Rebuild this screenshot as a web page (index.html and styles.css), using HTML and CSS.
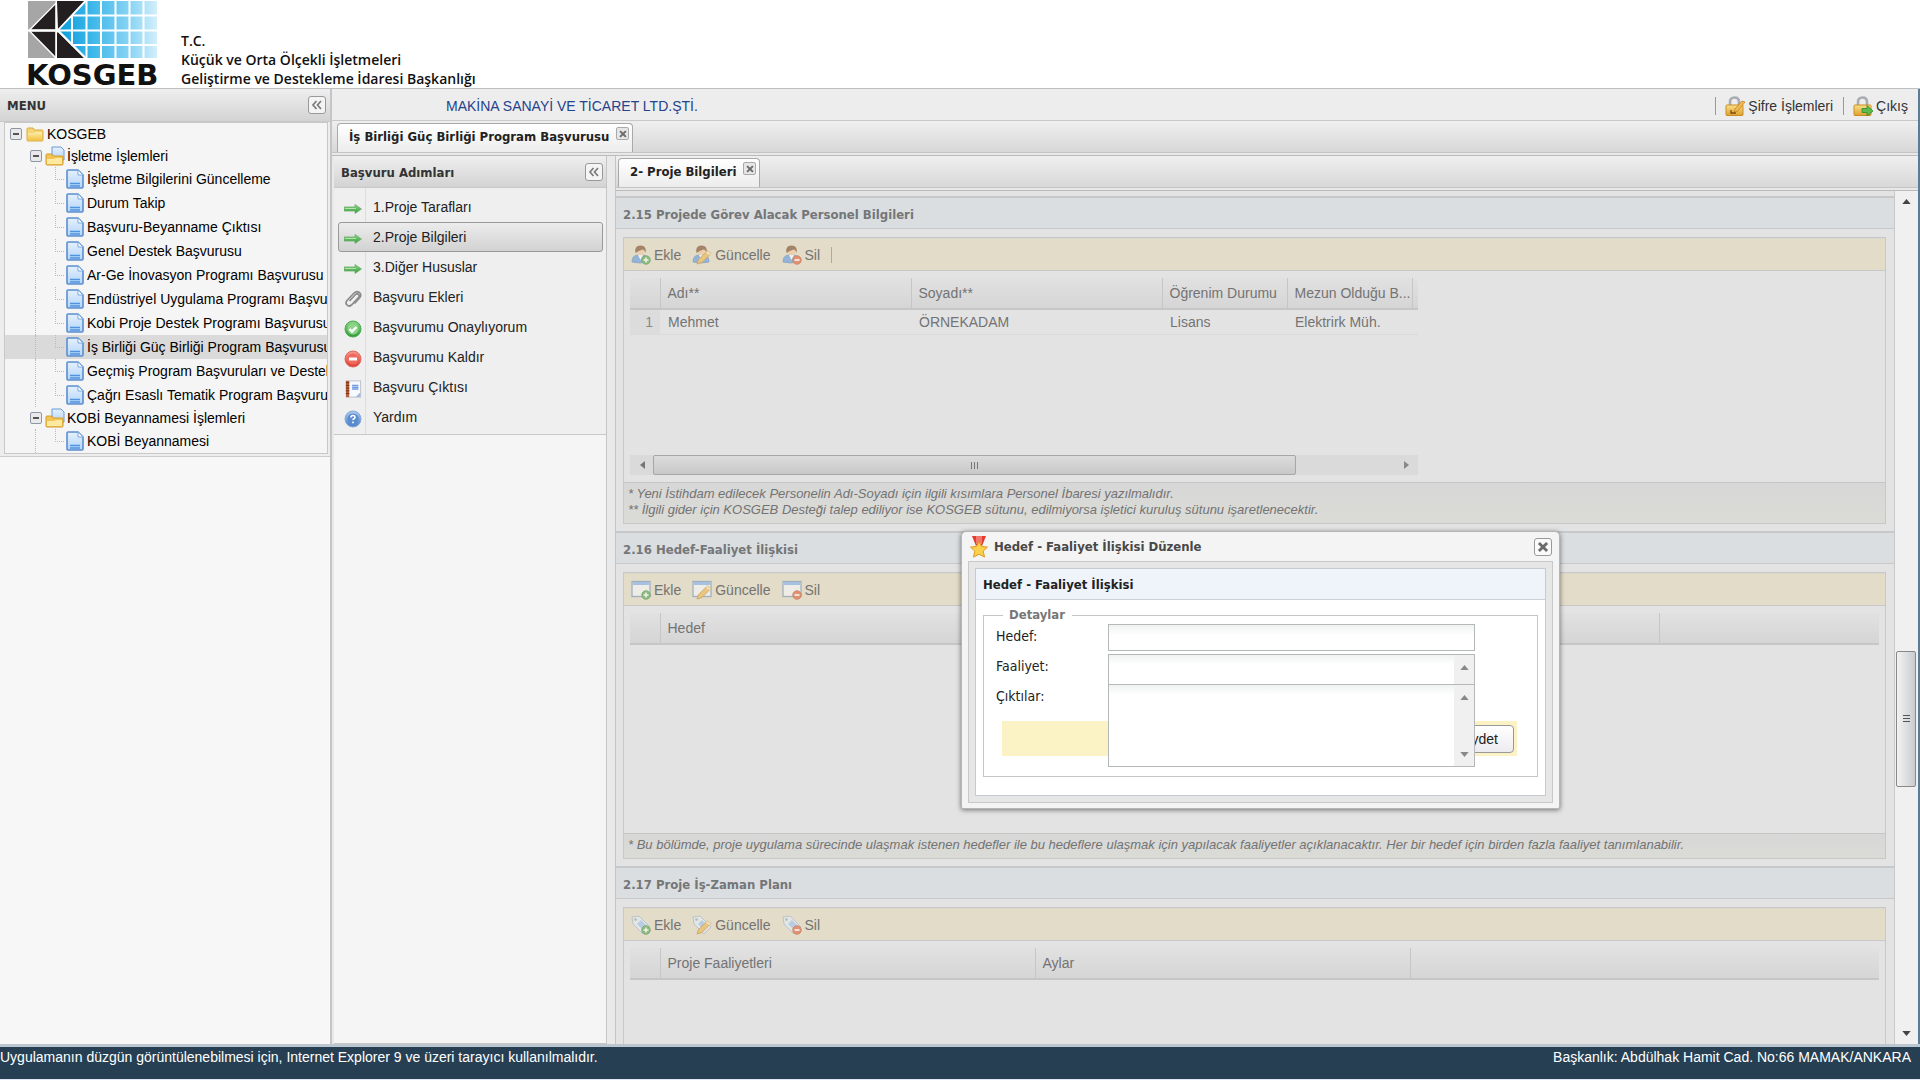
FILE: index.html
```html
<!DOCTYPE html>
<html lang="tr">
<head>
<meta charset="utf-8">
<title>KOSGEB</title>
<link rel="stylesheet" href="styles.css">
</head>
<body>
<svg class="defs" aria-hidden="true">
  <defs>
    <linearGradient id="gBlue" x1="0" x2="1"><stop offset="0" stop-color="#0b9ddb"/><stop offset=".35" stop-color="#3fb8ea"/><stop offset=".75" stop-color="#8fd6f5"/><stop offset="1" stop-color="#d3effb"/></linearGradient>
    <linearGradient id="gPage" x2="0" y2="1"><stop offset="0" stop-color="#e4f1fe"/><stop offset="1" stop-color="#b4d5f7"/></linearGradient>
    <linearGradient id="gFold" x2="0" y2="1"><stop offset="0" stop-color="#fdeeb0"/><stop offset="1" stop-color="#f3c443"/></linearGradient>
    <linearGradient id="gGreen" x2="0" y2="1"><stop offset="0" stop-color="#8fd88a"/><stop offset="1" stop-color="#2f9a35"/></linearGradient>
    <linearGradient id="gRed" x2="0" y2="1"><stop offset="0" stop-color="#f79a8e"/><stop offset="1" stop-color="#dd3a30"/></linearGradient>
    <linearGradient id="gHelp" x2="0" y2="1"><stop offset="0" stop-color="#a9c9f0"/><stop offset="1" stop-color="#4a7fc6"/></linearGradient>
    <linearGradient id="gLock" x2="0" y2="1"><stop offset="0" stop-color="#fbe08a"/><stop offset="1" stop-color="#dfa02c"/></linearGradient>
  </defs>
  <symbol id="i-page" viewBox="0 0 18 20"><path d="M1 2q0-1 1-1h10l5 5v12q0 1-1 1H2q-1 0-1-1z" fill="url(#gPage)" stroke="#5b8fd0" stroke-width="1.6"/><path d="M12 1v5h5z" fill="#fff" stroke="#7ba6dc"/><path d="M4 14.5h10M4 17h10" stroke="#4f93e0" stroke-width="1.4"/></symbol>
  <symbol id="i-folder" viewBox="0 0 18 16"><path d="M1 3q0-1 1-1h5l1.500 2H16q1 0 1 1v9q0 1-1 1H2q-1 0-1-1z" fill="#f6d577" stroke="#d9a93a"/><path d="M2 7h6l2-1h6v8H2z" fill="url(#gFold)"/></symbol>
  <symbol id="i-folderpage" viewBox="0 0 20 20"><path d="M7 1h9l3 3v10H7z" fill="url(#gPage)" stroke="#6b9ad6"/><path d="M1 9q0-1 1-1h5l1 2h9q1 0 1 1v7q0 1-1 1H2q-1 0-1-1z" fill="#f1c453" stroke="#d39c2c"/><path d="M2 13h7l2-1h6v6H2z" fill="#fde9a0"/></symbol>
  <symbol id="i-minus" viewBox="0 0 12 12"><rect x=".5" y=".5" width="11" height="11" rx="1.500" fill="#e9e9e9" stroke="#8d96a5"/><path d="M3 6h6" stroke="#222" stroke-width="1.500"/></symbol>
  <symbol id="i-arrow" viewBox="0 0 18 12"><path d="M0 4h11V1.500L17.500 6 11 10.500V8H0z" fill="url(#gGreen)" stroke="#6fae6f" stroke-width=".8"/><path d="M1 5.500h11" stroke="#b5e0b0"/></symbol>
  <symbol id="i-clip" viewBox="0 0 18 18"><path d="M5.500 11l6-6.500q1.500-1.500 3 0t0 3L7.500 15q-2.500 2-4.500 0t0-4.500L10 3q2.500-2.500 5.500-.5 2.500 2.500 0 5.500l-5 5.500" fill="none" stroke="#8b8b8b" stroke-width="1.700"/></symbol>
  <symbol id="i-check" viewBox="0 0 18 18"><circle cx="9" cy="9" r="8" fill="url(#gGreen)" stroke="#4da851"/><circle cx="9" cy="9" r="5.500" fill="#8fd48b"/><path d="M5.500 9l2.500 2.500 4.500-4.500" fill="none" stroke="#fff" stroke-width="2.400"/></symbol>
  <symbol id="i-remove" viewBox="0 0 18 18"><circle cx="9" cy="9" r="8" fill="url(#gRed)" stroke="#dd6a62"/><circle cx="9" cy="9" r="5.500" fill="#ee6a5e"/><path d="M5 9h8" stroke="#fff" stroke-width="3"/></symbol>
  <symbol id="i-book" viewBox="0 0 18 20"><rect x="1.500" y="1" width="16" height="18" fill="#f8f9fd" stroke="#b6bccb"/><path d="M3 1v18" stroke="#b6603c" stroke-width="3.500"/><path d="M1 3h4M1 6h4M1 9h4M1 12h4M1 15h4" stroke="#6b2d18"/><path d="M8 6h7M8 8h7M8 10h7" stroke="#6d9be0" stroke-width="1.600"/><path d="M12 19l5-5v5z" fill="#9db9df"/></symbol>
  <symbol id="i-help" viewBox="0 0 18 18"><circle cx="9" cy="9" r="8" fill="url(#gHelp)" stroke="#86aad8"/><circle cx="9" cy="9" r="5.500" fill="#5b8cd0"/><path d="M7 7.500q0-2 2-2t2 1.700q0 1-1 1.500t-1 1.300M9 11.500v1.700" fill="none" stroke="#fff" stroke-width="1.600"/></symbol>
  <symbol id="i-user" viewBox="0 0 20 20"><path d="M1 17q0-7 6-7h4q6 0 6 7-8 2-16 0z" fill="#5f9be0" stroke="#4478b8" stroke-width=".7"/><path d="M7 10l2.500 5L12 10z" fill="#fff"/><circle cx="9.500" cy="6" r="4.300" fill="#f1c9a0"/><path d="M4.500 8q-1.500-7.500 5-7.500T14.500 8q-1-3.500-3-3.500-4 1-7 3.500z" fill="#7b4a26"/></symbol>
  <symbol id="i-window" viewBox="0 0 20 20"><rect x="1" y="1.500" width="18" height="15" fill="#f6f8fc" stroke="#7593bd" stroke-width="1.300"/><path d="M2 3.500h16" stroke="#7fb0ef" stroke-width="3"/></symbol>
  <symbol id="i-tag" viewBox="0 0 20 20"><path d="M1 2l7-1 11 11-7 7L2 9z" fill="#e3edf8" stroke="#9db4cf"/><path d="M6 9l4-4 6 6-4 4z" fill="#9cc4f2"/><circle cx="4.500" cy="4.500" r="1.300" fill="#8aa"/></symbol>
  <symbol id="b-add" viewBox="0 0 20 20"><circle cx="15" cy="15" r="4.300" fill="#4fa84c" stroke="#2f7a31" stroke-width=".7"/><path d="M12.500 15h5M15 12.500v5" stroke="#fff" stroke-width="1.500"/></symbol>
  <symbol id="b-edit" viewBox="0 0 20 20"><path d="M5 19l1.500-4.500L15.500 6l3.500 2.500-9 9z" fill="#eeb64f" stroke="#b67f27" stroke-width=".8"/><path d="M15.500 6l3.500 2.500-1.500 1.700-3.600-2.500z" fill="#f7e3b4"/></symbol>
  <symbol id="b-del" viewBox="0 0 20 20"><circle cx="15" cy="15" r="4.300" fill="#e2603a" stroke="#b4411f" stroke-width=".7"/><path d="M12.500 15h5" stroke="#fff" stroke-width="1.700"/></symbol>
  <symbol id="i-lock" viewBox="0 0 20 20"><path d="M5 10V6q0-4.500 4.500-4.500T14 6v4" fill="none" stroke="#a9adb3" stroke-width="2.600"/><rect x="1" y="9" width="17" height="10.500" rx="1" fill="url(#gLock)" stroke="#c98d25"/></symbol>
  <symbol id="b-lockedit" viewBox="0 0 20 20"><path d="M6 14v3h5" stroke="#7a4a12" fill="none" stroke-width="1.300"/><path d="M9 16l1-3 7-8 3 1-7 9z" fill="#f3b94c" stroke="#b77d22" stroke-width=".7"/></symbol>
  <symbol id="b-go" viewBox="0 0 20 20"><path d="M9 12.500h5v-3l6 5.500-6 5v-3.500H9z" fill="#5dbb4e" stroke="#2f8a2c" stroke-width=".8"/></symbol>
  <symbol id="i-medal" viewBox="0 0 20 22"><path d="M3 0h5l2 8-3 2z" fill="#e33b30"/><path d="M17 0h-5l-2 8 3 2z" fill="#e33b30"/><path d="M7 0h6v8H7z" fill="#f4766a"/><path d="M10 5.500l2.600 5 5.900.6-4.300 4 1.300 6-5.500-2.900-5.500 2.900 1.300-6-4.300-4 5.900-.6z" fill="#fbd04a" stroke="#dd9a22"/></symbol>
  <symbol id="i-x" viewBox="0 0 12 12"><path d="M2.500 2.500l7 7M9.500 2.500l-7 7" stroke="#6b6b6b" stroke-width="2.400"/></symbol>
  <symbol id="i-collapse" viewBox="0 0 12 12"><path d="M5.500 2L2 6l3.500 4M10 2L6.500 6 10 10" fill="none" stroke="#7b7b7b" stroke-width="1.700"/></symbol>
  <symbol id="i-up" viewBox="0 0 10 6"><path d="M5 0l5 6H0z" fill="currentColor"/></symbol>
  <symbol id="i-down" viewBox="0 0 10 6"><path d="M0 0h10L5 6z" fill="currentColor"/></symbol>
  <symbol id="i-left" viewBox="0 0 6 10"><path d="M6 1v8L1 5z" fill="currentColor"/></symbol>
  <symbol id="i-right" viewBox="0 0 6 10"><path d="M0 1v8l5-4z" fill="currentColor"/></symbol>
</svg>

<div class="page">
  <header class="banner">
    <svg class="logo" width="132" height="88" viewBox="0 0 132 88" role="img" aria-label="KOSGEB">
      <path d="M1 1h28v57H1z" fill="#a6a6a6"/>
      <path d="M60 1h70v57H60L32 30z" fill="url(#gBlue)"/>
      <path d="M3 29L28 3v26zM3 32h25v25zM31 1h26L31 28zM31 32v26h26z" fill="#231f20"/>
      <path d="M1 30.500h129M29.500 1v57M45 14v32M59.500 1v57M74 1v57M88.500 1v57M102.500 1v57M116.500 1v57M44 15.500h86M44 45h86" stroke="#fff" stroke-width="2"/>
      <path d="M30 1h28L31 29.500zM30 32l27 26H30z" fill="#231f20"/>
      <path d="M2 30.500L29 3M2 30.500L29 58M59 0L30.500 30.500 59 59" fill="none" stroke="#fff" stroke-width="1.500"/>
      <text class="logo-text" x="-1" y="85">KOSGEB</text>
    </svg>
    <p class="org">T.C.<br>Küçük ve Orta Ölçekli İşletmeleri<br>Geliştirme ve Destekleme İdaresi Başkanlığı</p>
  </header>

  <div class="main">
    <aside class="menu">
      <div class="bar menu-head"><h2>MENU</h2><button class="tool" aria-label="Daralt"><svg><use href="#i-collapse"/></svg></button></div>
      <div class="tree-wrap">
      <ul class="tree">
        <li><a class="row root" href="#"><svg class="exp"><use href="#i-minus"/></svg><svg class="fold"><use href="#i-folder"/></svg>KOSGEB</a>
          <ul>
            <li><a class="row dir" href="#"><svg class="exp"><use href="#i-minus"/></svg><svg class="dirpic"><use href="#i-folderpage"/></svg>İşletme İşlemleri</a>
              <ul class="leaves">
                <li><a class="row leaf" href="#"><svg class="pg"><use href="#i-page"/></svg>İşletme Bilgilerini Güncelleme</a></li>
                <li><a class="row leaf" href="#"><svg class="pg"><use href="#i-page"/></svg>Durum Takip</a></li>
                <li><a class="row leaf" href="#"><svg class="pg"><use href="#i-page"/></svg>Başvuru-Beyanname Çıktısı</a></li>
                <li><a class="row leaf" href="#"><svg class="pg"><use href="#i-page"/></svg>Genel Destek Başvurusu</a></li>
                <li><a class="row leaf" href="#"><svg class="pg"><use href="#i-page"/></svg>Ar-Ge İnovasyon Programı Başvurusu</a></li>
                <li><a class="row leaf" href="#"><svg class="pg"><use href="#i-page"/></svg>Endüstriyel Uygulama Programı Başvurusu</a></li>
                <li><a class="row leaf" href="#"><svg class="pg"><use href="#i-page"/></svg>Kobi Proje Destek Programı Başvurusu</a></li>
                <li><a class="row leaf current" href="#"><svg class="pg"><use href="#i-page"/></svg>İş Birliği Güç Birliği Program Başvurusu</a></li>
                <li><a class="row leaf" href="#"><svg class="pg"><use href="#i-page"/></svg>Geçmiş Program Başvuruları ve Destekler</a></li>
                <li><a class="row leaf" href="#"><svg class="pg"><use href="#i-page"/></svg>Çağrı Esaslı Tematik Program Başvurusu</a></li>
              </ul>
            </li>
            <li><a class="row dir" href="#"><svg class="exp"><use href="#i-minus"/></svg><svg class="dirpic"><use href="#i-folderpage"/></svg>KOBİ Beyannamesi İşlemleri</a>
              <ul class="leaves">
                <li><a class="row leaf" href="#"><svg class="pg"><use href="#i-page"/></svg>KOBİ Beyannamesi</a></li>
              </ul>
            </li>
          </ul>
        </li>
      </ul>
      </div>
    </aside>

    <div class="work">
      <div class="topbar">
        <span class="company">MAKİNA SANAYİ VE TİCARET LTD.ŞTİ.</span>
        <nav class="account">
          <a href="#"><svg><use href="#i-lock"/><use href="#b-lockedit"/></svg>Şifre İşlemleri</a>
          <a href="#"><svg><use href="#i-lock"/><use href="#b-go"/></svg>Çıkış</a>
        </nav>
      </div>
      <div class="tabs outer"><div class="tab"><span>İş Birliği Güç Birliği Program Başvurusu</span><button aria-label="Kapat"><svg><use href="#i-x"/></svg></button></div></div>

      <div class="split">
        <section class="steps">
          <div class="bar steps-head"><h2>Başvuru Adımları</h2><button class="tool" aria-label="Daralt"><svg><use href="#i-collapse"/></svg></button></div>
          <nav class="step-list">
            <a href="#"><svg><use href="#i-arrow"/></svg>1.Proje Tarafları</a>
            <a class="current" href="#"><svg><use href="#i-arrow"/></svg>2.Proje Bilgileri</a>
            <a href="#"><svg><use href="#i-arrow"/></svg>3.Diğer Hususlar</a>
            <a href="#"><svg><use href="#i-clip"/></svg>Başvuru Ekleri</a>
            <a href="#"><svg><use href="#i-check"/></svg>Başvurumu Onaylıyorum</a>
            <a href="#"><svg><use href="#i-remove"/></svg>Başvurumu Kaldır</a>
            <a href="#"><svg><use href="#i-book"/></svg>Başvuru Çıktısı</a>
            <a href="#"><svg><use href="#i-help"/></svg>Yardım</a>
          </nav>
        </section>

        <section class="detail">
          <div class="tabs inner"><div class="tab"><span>2- Proje Bilgileri</span><button aria-label="Kapat"><svg><use href="#i-x"/></svg></button></div></div>
          <div class="scroller">
            <div class="content">
              <section class="block">
                <h3>2.15 Projede Görev Alacak Personel Bilgileri</h3>
                <div class="box">
                  <div class="toolbar">
                    <button><svg><use href="#i-user"/><use href="#b-add"/></svg>Ekle</button>
                    <button><svg><use href="#i-user"/><use href="#b-edit"/></svg>Güncelle</button>
                    <button><svg><use href="#i-user"/><use href="#b-del"/></svg>Sil</button>
                    <i class="sep"></i>
                  </div>
                  <div class="grid-area people">
                    <table class="grid">
                      <colgroup><col class="c-num"><col class="c-name"><col class="c-name"><col class="c-small"><col class="c-small"><col></colgroup>
                      <thead><tr><th></th><th>Adı**</th><th>Soyadı**</th><th>Öğrenim Durumu</th><th>Mezun Olduğu B...</th><th></th></tr></thead>
                      <tbody><tr><td class="num">1</td><td>Mehmet</td><td>ÖRNEKADAM</td><td>Lisans</td><td>Elektrirk Müh.</td><td></td></tr></tbody>
                    </table>
                    <div class="hscroll"><span class="arrow"><svg><use href="#i-left"/></svg></span><span class="thumb"><i></i></span><span class="arrow end"><svg><use href="#i-right"/></svg></span></div>
                  </div>
                  <p class="note">* Yeni İstihdam edilecek Personelin Adı-Soyadı için ilgili kısımlara Personel İbaresi yazılmalıdır.<br>** İlgili gider için KOSGEB Desteği talep ediliyor ise KOSGEB sütunu, edilmiyorsa işletici kuruluş sütunu işaretlenecektir.</p>
                </div>
              </section>

              <section class="block">
                <h3>2.16 Hedef-Faaliyet İlişkisi</h3>
                <div class="box">
                  <div class="toolbar">
                    <button><svg><use href="#i-window"/><use href="#b-add"/></svg>Ekle</button>
                    <button><svg><use href="#i-window"/><use href="#b-edit"/></svg>Güncelle</button>
                    <button><svg><use href="#i-window"/><use href="#b-del"/></svg>Sil</button>
                  </div>
                  <div class="grid-area goals">
                    <table class="grid">
                      <colgroup><col class="c-num"><col class="c-goal"><col class="c-goal"><col class="c-goal"><col></colgroup>
                      <thead><tr><th></th><th>Hedef</th><th></th><th></th><th></th></tr></thead>
                    </table>
                  </div>
                  <p class="note">* Bu bölümde, proje uygulama sürecinde ulaşmak istenen hedefler ile bu hedeflere ulaşmak için yapılacak faaliyetler açıklanacaktır. Her bir hedef için birden fazla faaliyet tanımlanabilir.</p>
                </div>
              </section>

              <section class="block last">
                <h3>2.17 Proje İş-Zaman Planı</h3>
                <div class="box">
                  <div class="toolbar">
                    <button><svg><use href="#i-tag"/><use href="#b-add"/></svg>Ekle</button>
                    <button><svg><use href="#i-tag"/><use href="#b-edit"/></svg>Güncelle</button>
                    <button><svg><use href="#i-tag"/><use href="#b-del"/></svg>Sil</button>
                  </div>
                  <div class="grid-area">
                    <table class="grid">
                      <colgroup><col class="c-num"><col class="c-plan"><col class="c-plan"><col></colgroup>
                      <thead><tr><th></th><th>Proje Faaliyetleri</th><th>Aylar</th><th></th></tr></thead>
                    </table>
                  </div>
                </div>
              </section>
            </div>
            <div class="vscroll"><svg class="va"><use href="#i-up"/></svg><span class="vthumb"><i></i></span><svg class="va"><use href="#i-down"/></svg></div>
          </div>

          <form class="dialog" role="dialog" aria-labelledby="dlg-title">
            <div class="dialog-head"><svg class="medal"><use href="#i-medal"/></svg><h2 id="dlg-title">Hedef - Faaliyet İlişkisi Düzenle</h2><button type="button" class="close" aria-label="Kapat"><svg><use href="#i-x"/></svg></button></div>
            <div class="dialog-body">
              <div class="card">
                <h3>Hedef - Faaliyet İlişkisi</h3>
                <fieldset>
                  <legend>Detaylar</legend>
                  <div class="field"><label for="hedef">Hedef:</label><input id="hedef" type="text"></div>
                  <div class="field"><label for="faaliyet">Faaliyet:</label><div class="area"><textarea id="faaliyet"></textarea><span class="track"><svg><use href="#i-up"/></svg><svg><use href="#i-down"/></svg></span></div></div>
                  <div class="field tall"><label for="ciktilar">Çıktılar:</label><div class="area"><textarea id="ciktilar"></textarea><span class="track"><svg><use href="#i-up"/></svg><svg><use href="#i-down"/></svg></span></div></div>
                  <div class="actions"><button type="button">Kaydet</button></div>
                </fieldset>
              </div>
            </div>
          </form>
        </section>
      </div>
    </div>
  </div>

  <footer class="footer"><span>Uygulamanın düzgün görüntülenebilmesi için, Internet Explorer 9 ve üzeri tarayıcı kullanılmalıdır.</span><span>Başkanlık: Abdülhak Hamit Cad. No:66 MAMAK/ANKARA</span></footer>
</div>
</body>
</html>
```
FILE: styles.css
```css
* { box-sizing: border-box; }
body { margin: 0; font: 14px/16px "Liberation Sans", Arial, sans-serif; color: #222; }
h2, h3, p, ul { margin: 0; padding: 0; }
ul { list-style: none; }
a { color: inherit; text-decoration: none; }
button { font: inherit; color: inherit; padding: 0; border: 0; background: none; }
.defs { position: absolute; width: 0; height: 0; }
h2, h3, .tab, legend { font: bold 13px/18px "DejaVu Sans Condensed", "DejaVu Sans", sans-serif; }

.page { display: flex; flex-direction: column; height: 100vh; overflow: hidden; background: #fff; }
.banner { display: flex; gap: 22px; height: 88px; padding-left: 27px; flex: none; }
.logo { overflow: visible; flex: none; }
.logo-text { font: bold 29px "DejaVu Sans", sans-serif; fill: #111; }
.org { padding-top: 31px; font: 600 14px/19px "Open Sans", "Noto Sans", sans-serif; color: #111; white-space: nowrap; }

.main { flex: 1; min-height: 0; display: grid; grid-template-columns: 332px 1fr; border-top: 1px solid #bdbfc2; border-bottom: 3px solid #bcc6cf; }
.bar { display: flex; align-items: center; justify-content: space-between; background: linear-gradient(#efefef, #d3d3d3); border-bottom: 1px solid #c8c8c8; }
.bar h2 { color: #333; padding-top: 2px; }
.tool { width: 18px; height: 18px; border: 1px solid #999; border-radius: 3px; background: #f4f4f4; display: grid; place-items: center; }
.tool svg { width: 12px; height: 12px; }

.menu { background: #f7f7f7; border-right: 2px solid #c3c5c9; overflow: hidden; }
.menu-head { height: 33px; padding: 0 4px 0 7px; }
.tree-wrap { background: #ededed; padding: 0 2px 2px 4px; border-bottom: 1px solid #ccc; }
.tree { border: 1px solid #c8c8c8; background: #f5f5f5; overflow: hidden; color: #000; }
.row { display: flex; align-items: center; white-space: nowrap; height: 24px; }
.row svg { flex: none; }
.root { height: 22px; padding-left: 5px; }
.exp { width: 12px; height: 12px; }
.fold { width: 18px; height: 16px; margin: 0 3px 0 4px; }
.dir { height: 22px; padding-left: 25px; }
.dirpic { width: 20px; height: 20px; margin: 0 2px 0 3px; }
.leaf { position: relative; padding-left: 61px; }
.pg { width: 18px; height: 20px; margin-right: 3px; }
.leaf::before { content: ""; position: absolute; left: 30px; top: 0; height: 100%; border-left: 1px dotted #bbb; }
.leaf::after { content: ""; position: absolute; left: 50px; top: 0; height: 50%; width: 8px; border: dotted #bbb; border-width: 0 0 1px 1px; }
.leaf.current { background: #dadada; }

.work { display: flex; flex-direction: column; min-width: 0; background: #e9e9e9; border-right: 2px solid #5c7b94; }
.topbar { display: flex; align-items: center; justify-content: space-between; height: 32px; flex: none; padding: 3px 10px 0 114px; background: #ededed; border-bottom: 1px solid #c9c9c9; }
.company { color: #25438c; }
.account { display: flex; color: #333; }
.account a { display: flex; align-items: center; gap: 3px; border-left: 1px solid #999; padding-left: 9px; height: 18px; }
.account a + a { margin-left: 10px; }
.account svg { width: 20px; height: 20px; }

.tabs { display: flex; align-items: flex-end; flex: none; height: 35px; padding: 0 0 3px 5px; background: linear-gradient(#efefef, #d8d8d8 31px, #c4c4c4 31px, #c4c4c4 32px, #e8e8e8 32px); border-bottom: 1px solid #bbb; }
.tab { display: flex; align-items: center; gap: 7px; height: 29px; padding: 0 3px 3px 11px; border: 1px solid #a9a9a9; border-bottom: 0; border-radius: 4px 4px 0 0; background: linear-gradient(#fff, #ececec); color: #222; white-space: nowrap; }
.tab button { width: 13px; height: 13px; margin-bottom: 6px; border: 1px solid #aaa; border-radius: 2px; background: #e6e6e6; display: grid; place-items: center; }
.tab svg { width: 10px; height: 10px; }

.split { flex: 1; min-height: 0; display: grid; grid-template-columns: 273px 1fr; gap: 8px; padding-left: 2px; }
.steps { background: #f5f5f5; border-right: 1px solid #c6c6c6; border-bottom: 1px solid #c6c6c6; }
.steps-head { height: 32px; padding: 0 3px 0 7px; }
.step-list { position: relative; background: #efefef; border-bottom: 1px solid #c9c9c9; padding: 4px 3px 2px 4px; }
.step-list::before { content: ""; position: absolute; left: 31px; top: 0; bottom: 0; border-left: 1px solid #ddd; }
.step-list a { position: relative; display: flex; align-items: center; gap: 11px; height: 30px; padding-left: 5px; border: 1px solid transparent; }
.step-list a.current { background: linear-gradient(#ececec, #d2d2d2); border-color: #999; border-radius: 3px; }
.step-list svg { width: 18px; height: 18px; margin-top: 4px; }

.detail { position: relative; display: flex; flex-direction: column; min-width: 0; min-height: 0; border-left: 1px solid #c4c4c4; background: #e3e3e3; }
.inner { padding-left: 2px; }
.scroller { flex: 1; min-height: 0; display: flex; }
.content { flex: 1; min-width: 0; display: flex; flex-direction: column; overflow: hidden; padding-top: 5px; color: #737373; }
.block h3 { height: 33px; padding: 8px 7px 0; background: #dadee1; border-top: 2px solid #c6c8ca; border-bottom: 1px solid #c6c8ca; color: #747678; }
.block { padding-bottom: 7px; flex: none; }
.box { margin: 8px 8px 0 7px; border: 1px solid #c8c8c8; }
.toolbar { display: flex; align-items: center; gap: 11px; height: 33px; padding-left: 7px; background: #e3dcc8; border-bottom: 1px solid #c8c8c8; border-top: 1px solid #dad7cc; }
.toolbar button { display: flex; align-items: center; gap: 3px; }
.toolbar svg { width: 20px; height: 20px; opacity: .6; }
.sep { height: 16px; border-left: 1px solid #aaa; }
.grid-area { padding: 7px 6px 0; }
.people { width: 800px; height: 211px; display: flex; flex-direction: column; justify-content: space-between; padding-bottom: 7px; }
.goals { height: 227px; }
.grid { width: 100%; table-layout: fixed; border-collapse: collapse; }
.c-num { width: 30px; } .c-name { width: 251px; } .c-small { width: 125px; } .c-goal { width: 333px; } .c-plan { width: 375px; }
.grid th { height: 31px; padding: 0 0 0 7px; text-align: left; font-weight: normal; white-space: nowrap; border-bottom: 2px solid #c6c6c6; border-right: 1px solid #c6c6c6; background: linear-gradient(#e1e1e1, #d5d5d5); }
.grid th:last-child { border-right: 0; }
.grid td { height: 25px; padding: 0 0 0 8px; border-bottom: 1px solid #dadada; }
.grid .num { text-align: right; padding-right: 7px; background: #dcdcdc; color: #8a8a8a; }
.hscroll { display: flex; height: 20px; background: #dadada; color: #777; }
.arrow { width: 23px; display: grid; place-items: center; }
.arrow svg { width: 6px; height: 10px; }
.arrow.end { margin-left: auto; color: #888; }
.thumb { width: 643px; border: 1px solid #a6a6a6; border-radius: 2px; background: linear-gradient(#dcdcdc, #c8c8c8); display: grid; place-items: center; }
.thumb i { width: 7px; height: 7px; background: repeating-linear-gradient(90deg, #777 0 1px, transparent 1px 3px); }
.note { font-size: 13px; font-style: italic; padding: 3px 4px 5px; background: linear-gradient(#d7d7d7, #dbdbd6); border-top: 1px solid #c6c6c6; white-space: nowrap; }
.last { padding: 0; flex: 1; display: flex; flex-direction: column; }
.last .box { flex: 1; border-bottom: 0; }

.vscroll { flex: none; width: 24px; display: grid; grid-template-rows: 5px 11fr 136px 6fr 5px; justify-items: center; background: #f0f0f0; border-left: 1px solid #c8c8c8; padding: 8px 1px 8px 0; }
.va { width: 9px; height: 5px; color: #444; }
.va:last-child { grid-row: 5; }
.vthumb { grid-row: 3; width: 20px; border: 1px solid #888; border-radius: 2px; background: linear-gradient(90deg, #f2f2f2, #c9cccf); display: grid; place-items: center; }
.vthumb i { width: 7px; height: 8px; background: repeating-linear-gradient(#555 0 1px, transparent 1px 3px); }

.dialog { position: absolute; left: 345px; top: 375px; width: 599px; padding: 0 6px 5px; border: 1px solid #b5b5b5; border-radius: 5px 5px 2px 2px; background: #f4f4f4; box-shadow: 0 1px 5px rgba(0, 0, 0, .5); }
.dialog-head { display: flex; align-items: center; gap: 5px; height: 29px; padding: 0 1px; color: #484848; }
.dialog-head h2 { flex: 1; }
.medal { width: 20px; height: 22px; }
.close { width: 18px; height: 18px; border: 1px solid #999; border-radius: 3px; background: #fafafa; display: grid; place-items: center; }
.close svg { width: 14px; height: 14px; }
.dialog-body { padding: 6px; background: #e6e6e6; border: 1px solid #c8c8c8; }
.card { height: 228px; background: #fff; border: 1px solid #c5cbd1; }
.card h3 { height: 31px; padding: 7px 7px 0; background: #eef4f9; border-bottom: 1px solid #c9d0d6; }
fieldset { margin: 6px 7px 0; padding: 0 12px 20px; border: 1px solid #c5c5c5; min-width: 0; }
legend { margin-left: 7px; padding: 0 7px 0 6px; color: #777; }
.field { position: relative; z-index: 1; display: flex; height: 30px; }
.field.tall { height: 37px; }
.field label { width: 112px; padding-top: 3px; font: 14px/18px "DejaVu Sans Condensed", "DejaVu Sans", sans-serif; }
.field input, .field textarea { width: 367px; margin: 0; border: 1px solid #b4b8b8; background: linear-gradient(#f0f2f2, #fff 10px); font: inherit; padding: 2px 4px; }
.field input { height: 27px; }
.area { position: relative; width: 367px; height: 83px; }
.field textarea { display: block; height: 83px; resize: none; overflow: hidden; }
.track { position: absolute; right: 1px; top: 1px; bottom: 1px; width: 20px; display: flex; flex-direction: column; justify-content: space-between; align-items: center; padding: 10px 0 9px; background: #f0f0f0; color: #888; }
.track svg { width: 9px; height: 5px; }
.actions { display: flex; justify-content: flex-end; align-items: center; height: 35px; margin: 0 8px 0 6px; padding-right: 3px; background: #fbf2c6; }
.actions button { height: 28px; padding: 0 15px; border: 1px solid #999; border-radius: 4px; background: linear-gradient(#fff, #ececf0); }

.footer { display: flex; justify-content: space-between; flex: none; height: 33px; padding: 2px 9px 0 0; background: #273f53; border-bottom: 1px solid #dde8f2; color: #fff; }
```
